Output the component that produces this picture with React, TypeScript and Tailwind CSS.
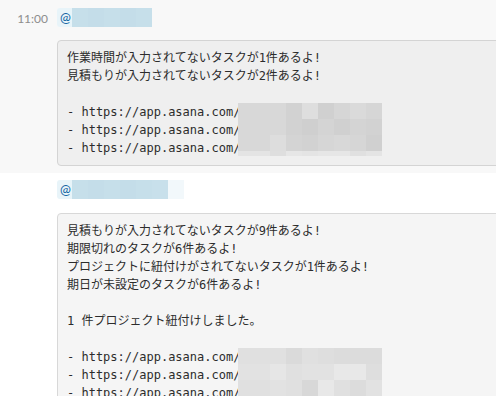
import React from "react";

const mono = { fontFamily: '"DejaVu Sans Mono", "Noto Sans CJK JP", monospace' };

const blur1 = [
  ["#d8d8d8", "#d8d8d8", "#d8d8d8", "#d2d2d2", "#dedede", "#d0d0d0", "#d6d6d6", "#dadada", "#d6d6d6"],
  ["#d8d8d8", "#d8d8d8", "#d8d8d8", "#d2d2d2", "#cfcfcf", "#d4d4d4", "#d0d0d0", "#d4d4d4", "#d2d2d2"],
  ["#d8d8d8", "#d8d8d8", "#dddddd", "#d4d4d4", "#d2d2d2", "#d6d6d6", "#d8d8d8", "#d6d6d6", "#d0d0d0"],
  ["#e4e4e4", "#e4e4e4", "#dedede", "#e6e6e6", "#e4e4e4", "#e6e6e6", "#e6e6e6", "#e0e0e0", "#e4e4e4"],
];
const blur2 = [
  ["#e0e0e0", "#e0e0e0", "#e0e0e0", "#dadada", "#e0e0e0", "#dedede", "#dcdcdc", "#dcdcdc", "#dcdcdc"],
  ["#e2e2e2", "#e2e2e2", "#e6e6e6", "#e0e0e0", "#e2e2e2", "#e2e2e2", "#e8e8e8", "#e8e8e8", "#dedede"],
  ["#e0e0e0", "#e0e0e0", "#e2e2e2", "#e0e0e0", "#d8d8d8", "#e8e8e8", "#e0e0e0", "#dcdcdc", "#e2e2e2"],
  ["#d4d4d4", "#d4d4d4", "#d0d0d0", "#cccccc", "#c0c0c0", "#cccccc", "#cecece", "#d0d0d0", "#d0d0d0"],
];

function Blur({ rows, lastH }: { rows: string[][]; lastH: number }) {
  return (
    <div className="absolute left-[171px] top-0 flex flex-col">
      {rows.map((r, i) => (
        <div key={i} className="flex" style={{ height: i === rows.length - 1 ? lastH : 16 }}>
          {r.map((c, j) => (
            <div key={j} className="w-[16px] h-full" style={{ backgroundColor: c }} />
          ))}
        </div>
      ))}
    </div>
  );
}

function Mention({ cells, tail }: { cells: string[]; tail: number }) {
  return (
    <div className="flex h-[19px] items-center rounded-[3px] bg-[#e8f4f9]">
      <span
        className="pl-[3px] pr-[1px] text-[13px] leading-none text-[#1264a3]"
        style={{ fontFamily: 'Lato, "Noto Sans", sans-serif' }}
      >
        @
      </span>
      <div className="flex h-full">
        {cells.map((c, i) => (
          <div key={i} className="w-[16px] h-full" style={{ backgroundColor: c }} />
        ))}
      </div>
      <div className="h-full bg-[#f2f8fb]" style={{ width: tail }} />
    </div>
  );
}

function Line({ children }: { children?: React.ReactNode }) {
  return <div className="h-[18px] leading-[18px] whitespace-pre">{children}</div>;
}

export default function App() {
  return (
    <div className="w-[496px] h-[396px] overflow-hidden bg-white text-[#2c2c2c]">
      <div className="bg-[#f8f8f8] pt-[8px] pb-[7px]">
        <div className="flex">
          <div
            className="w-[57px] shrink-0 pr-[9px] pt-[1px] text-right text-[12px] leading-[19px] text-[#8d8d8d]"
            style={{ fontFamily: 'Lato, "Noto Sans", sans-serif' }}
          >
            11:00
          </div>
          <div className="flex shrink-0 flex-col">
            <div className="flex">
              <Mention cells={["#c6dfea", "#c4dde9", "#c6dfea", "#c4dde9", "#c6dfea"]} tail={0} />
            </div>
            <div
              className="mt-[13px] w-[470px] rounded-[4px] border border-[#d4d4d4] bg-[#efefef] px-[9px] py-[8px] text-[12px]"
              style={mono}
            >
              <Line>作業時間が入力されてないタスクが1件あるよ!</Line>
              <Line>見積もりが入力されてないタスクが2件あるよ!</Line>
              <Line> </Line>
              <div className="relative">
                <Line>- https://app.asana.com/</Line>
                <Line>- https://app.asana.com/</Line>
                <Line>- https://app.asana.com/</Line>
                <Blur rows={blur1} lastH={5} />
              </div>
            </div>
          </div>
        </div>
      </div>
      <div className="flex pt-[7px]">
        <div className="w-[57px] shrink-0" />
        <div className="flex shrink-0 flex-col">
          <div className="flex">
            <Mention
              cells={["#c6dfea", "#c4dde9", "#c6dfea", "#c4dde9", "#c6dfea", "#c8e0eb"]}
              tail={16}
            />
          </div>
          <div
            className="mt-[14px] w-[470px] rounded-[4px] border border-[#d8d8d8] bg-[#f5f5f5] px-[9px] py-[8px] text-[12px]"
            style={mono}
          >
            <Line>見積もりが入力されてないタスクが9件あるよ!</Line>
            <Line>期限切れのタスクが6件あるよ!</Line>
            <Line>プロジェクトに紐付けがされてないタスクが1件あるよ!</Line>
            <Line>期日が未設定のタスクが6件あるよ!</Line>
            <Line> </Line>
            <Line>1 件プロジェクト紐付けしました。</Line>
            <Line> </Line>
            <div className="relative">
              <Line>- https://app.asana.com/</Line>
              <Line>- https://app.asana.com/</Line>
              <Line>- https://app.asana.com/</Line>
              <Blur rows={blur2} lastH={16} />
            </div>
          </div>
        </div>
      </div>
    </div>
  );
}
